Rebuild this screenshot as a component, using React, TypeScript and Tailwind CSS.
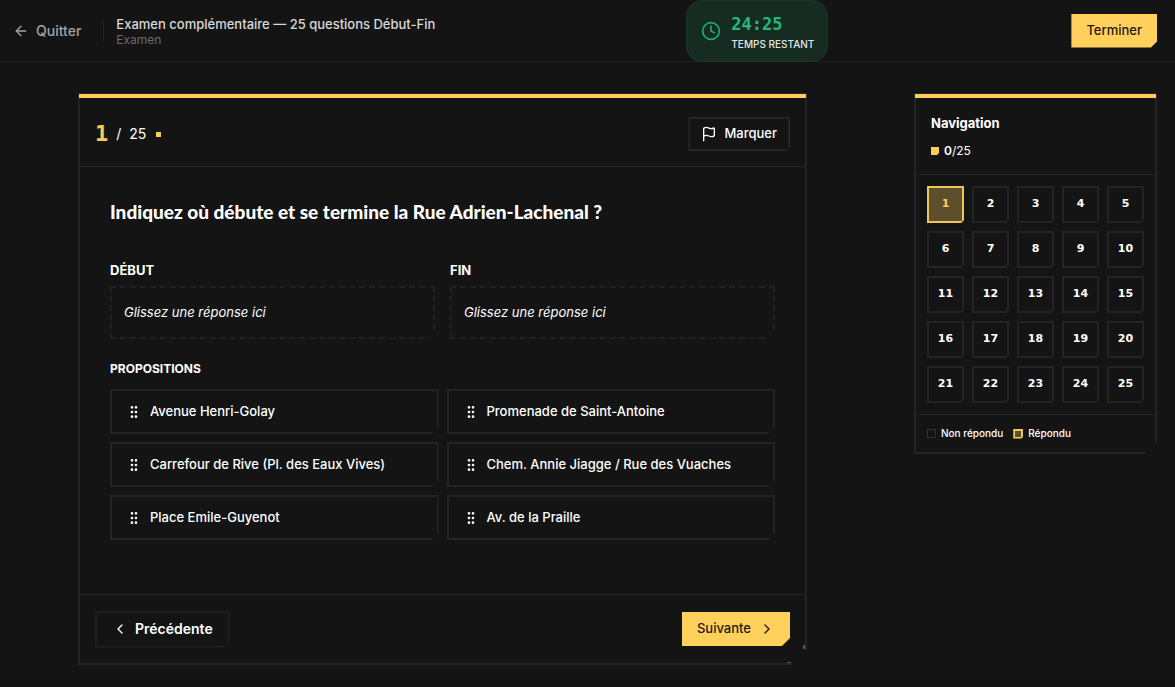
import { useState } from "react";
import { ArrowLeft, ChevronLeft, ChevronRight, Clock, Flag, GripVertical } from "lucide-react";
import clsx from "clsx";

const TOTAL = 25;

const PROPOSITIONS = [
  "Avenue Henri-Golay",
  "Promenade de Saint-Antoine",
  "Carrefour de Rive (Pl. des Eaux Vives)",
  "Chem. Annie Jiagge / Rue des Vuaches",
  "Place Emile-Guyenot",
  "Av. de la Praille",
];

export default function App() {
  const [current, setCurrent] = useState(1);

  return (
    <div className="min-h-screen bg-[#141414] font-['Inter',sans-serif] text-[13px] text-white">
      <ExamHeader />
      <main className="grid grid-cols-[minmax(0,1fr)_243px] items-start gap-12 pt-[31px] pr-[18px] pb-6 pl-[19px]">
        <QuestionCard current={current} onChange={setCurrent} />
        <NavigationCard current={current} onSelect={setCurrent} />
      </main>
    </div>
  );
}

/* ----------------------------  HEADER  ---------------------------- */

function ExamHeader() {
  return (
    <header className="flex h-[62px] items-center justify-between border-b border-[#222222] pr-[18px] pl-[13px]">
      <div className="flex items-center pr-2">
        <button className="flex items-center gap-[7px] text-sm font-medium text-[#a3a3a3]">
          <ArrowLeft size={16} />
          Quitter
        </button>
        <div className="mr-3 ml-[22px] h-5 w-px bg-[#242424]" />
        <div className="pt-[2px]">
          <h1 className="leading-4 font-medium text-[#d9d9d9]">
            Examen complémentaire — 25 questions Début-Fin
          </h1>
          <p className="text-xs leading-4 text-[#6b6b6b]">Examen</p>
        </div>
      </div>

      <div className="flex h-[62px] w-[142px] items-center gap-[10px] rounded-2xl border border-[#17392b] bg-[#162b22] pl-[14px]">
        <Clock size={20} className="shrink-0 text-[#22a874]" />
        <div className="pt-[2px]">
          <div className="font-['DejaVu_Sans_Mono',monospace] text-[17px] leading-6 font-bold text-[#28b67d]">
            24:25
          </div>
          <div className="text-[10px] leading-4 font-medium whitespace-nowrap text-[#e2e8e5]">
            TEMPS RESTANT
          </div>
        </div>
      </div>

      <button className="h-[34px] bg-[#ffd15c] px-[15px] font-medium text-[#1c1a14] [clip-path:polygon(0_0,100%_0,100%_calc(100%-6px),calc(100%-6px)_100%,0_100%)]">
        Terminer
      </button>
    </header>
  );
}

/* ----------------------------  QUESTION  ---------------------------- */

function QuestionCard({ current, onChange }: { current: number; onChange: (n: number) => void }) {
  return (
    <section className="relative mx-auto w-full max-w-[729px] border-2 border-[#242424] [clip-path:polygon(0_0,100%_0,100%_calc(100%-16px),calc(100%-16px)_100%,0_100%)]">
      <div className="absolute -inset-x-px -top-px h-1 bg-[#fccf5c]" />

      <div className="flex h-[72px] items-center justify-between border-b border-[#242424] px-[15px] pt-[7px]">
        <div className="flex items-center gap-2 text-sm">
          <span className="font-['DejaVu_Sans_Mono',monospace] text-[22px] leading-7 font-bold text-[#f8cc5c]">
            {current}
          </span>
          <span>/</span>
          <span>{TOTAL}</span>
          <span className="ml-[2px] size-[5px] bg-[#fccf5c]" />
        </div>
        <button className="flex h-[34px] items-center gap-[7px] border-2 border-[#262626] px-[11px] font-medium [clip-path:polygon(0_0,100%_0,100%_calc(100%-4px),calc(100%-4px)_100%,0_100%)]">
          <Flag size={16} />
          Marquer
        </button>
      </div>

      <div className="px-[30px] pt-[29px] pb-[54px]">
        <h2 className="font-['Lato',sans-serif] text-[19px] leading-8 font-black">
          Indiquez où débute et se termine la Rue Adrien-Lachenal ?
        </h2>
        <div className="mt-8 grid grid-cols-2 gap-[15px]">
          <DropZone label="DÉBUT" />
          <DropZone label="FIN" />
        </div>
        <h3 className="mt-5 text-xs leading-5 font-bold">PROPOSITIONS</h3>
        <div className="mt-[10px] grid grid-cols-2 gap-2">
          {PROPOSITIONS.map((p) => (
            <button
              key={p}
              draggable
              className="flex h-[45px] items-center gap-2 border-2 border-[#242424] px-[14px] text-left font-medium [clip-path:polygon(0_0,100%_0,100%_calc(100%-7px),calc(100%-7px)_100%,0_100%)]"
            >
              <GripVertical size={16} className="shrink-0" />
              {p}
            </button>
          ))}
        </div>
      </div>

      <div className="flex h-[69px] items-center justify-between border-t border-[#242424] px-[15px]">
        <button
          onClick={() => onChange(Math.max(1, current - 1))}
          className="flex h-[37px] items-center gap-[7px] border-2 border-[#1e1e1e] px-[15px] text-sm font-semibold [clip-path:polygon(0_0,100%_0,100%_calc(100%-7px),calc(100%-7px)_100%,0_100%)]"
        >
          <ChevronLeft size={16} />
          Précédente
        </button>
        <button
          onClick={() => onChange(Math.min(TOTAL, current + 1))}
          className="flex h-[34px] items-center gap-2 bg-[#ffd15c] px-[15px] font-medium text-[#1c1a14] [clip-path:polygon(0_0,100%_0,100%_calc(100%-8px),calc(100%-8px)_100%,0_100%)]"
        >
          Suivante
          <ChevronRight size={16} />
        </button>
      </div>

      {/* accent glints on both ends of the cut corner */}
      <div className="absolute right-0 bottom-[14px] h-1 w-[2px] bg-[#655934]" />
      <div className="absolute right-[14px] bottom-0 h-px w-1 bg-[#655934]" />
    </section>
  );
}

function DropZone({ label }: { label: string }) {
  return (
    <div>
      <h3 className="mb-[6px] leading-5 font-bold">{label}</h3>
      <div className="flex h-[53px] items-center border-2 border-dashed border-[#202020] px-3 italic [clip-path:polygon(0_0,100%_0,100%_calc(100%-8px),calc(100%-8px)_100%,0_100%)]">
        Glissez une réponse ici
      </div>
    </div>
  );
}

/* ----------------------------  NAVIGATION  ---------------------------- */

function NavigationCard({ current, onSelect }: { current: number; onSelect: (n: number) => void }) {
  return (
    <aside className="relative border-2 border-[#242424] [clip-path:polygon(0_0,100%_0,100%_calc(100%-13px),calc(100%-13px)_100%,0_100%)]">
      <div className="absolute -inset-x-px -top-px h-1 bg-[#fccf5c]" />

      <div className="h-20 border-b border-[#242424] px-[15px] pt-[18px]">
        <h2 className="leading-5 font-bold">Navigation</h2>
        <p className="mt-2 flex items-center gap-[5px] text-xs leading-5">
          <span className="size-2 bg-[#fccf5c] [clip-path:polygon(0_0,100%_0,100%_75%,75%_100%,0_100%)]" />
          <span>
            <strong className="font-semibold">0</strong>/{TOTAL}
          </span>
        </p>
      </div>

      <nav className="grid grid-cols-5 gap-2 p-[11px]">
        {Array.from({ length: TOTAL }, (_, i) => i + 1).map((n) => (
          <button
            key={n}
            onClick={() => onSelect(n)}
            className={clsx(
              "h-[37px] border-2 font-['DejaVu_Sans',sans-serif] text-[11px] font-bold [clip-path:polygon(0_0,100%_0,100%_calc(100%-3px),calc(100%-3px)_100%,0_100%)]",
              n === current ? "border-[#f0c65a] bg-[#5d4f2c] text-[#fccf5c]" : "border-[#242424]"
            )}
          >
            {n}
          </button>
        ))}
      </nav>

      <div className="flex h-[38px] items-center gap-[10px] border-t border-[#242424] px-[11px] text-[10px] font-medium">
        <span className="flex items-center gap-[5px]">
          <span className="size-[9px] border border-[#303030]" />
          Non répondu
        </span>
        <span className="flex items-center gap-[5px]">
          <span className="size-[10px] border-2 border-[#f0c65a] bg-[#5d4f2c] [clip-path:polygon(0_0,100%_0,100%_80%,80%_100%,0_100%)]" />
          Répondu
        </span>
      </div>
    </aside>
  );
}
